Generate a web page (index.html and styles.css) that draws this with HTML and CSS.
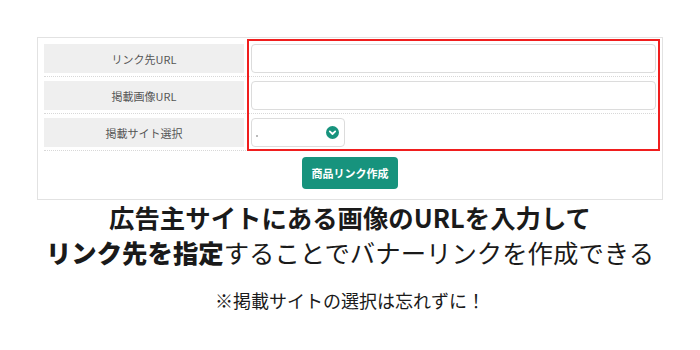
FILE: index.html
```html
<!DOCTYPE html>
<html lang="ja">
<head>
    <meta charset="UTF-8">
    <meta name="viewport" content="width=device-width, initial-scale=1.0">
    <title>バナーリンク作成</title>
    <link rel="stylesheet" href="styles.css">
</head>
<body>
    <div class="form-box">
        <div class="row">
            <div class="label">リンク先URL</div>
            <div class="field"><div class="input"></div></div>
        </div>
        <div class="row">
            <div class="label">掲載画像URL</div>
            <div class="field"><div class="input"></div></div>
        </div>
        <div class="row">
            <div class="label">掲載サイト選択</div>
            <div class="field">
                <div class="select">
                    <span class="dot"></span>
                    <svg class="chevron" width="13" height="13" viewBox="0 0 13 13">
                        <circle cx="6.5" cy="6.5" r="6.5" fill="#17937d"/>
                        <path d="M3.8 5.4 L6.5 8 L9.2 5.4" fill="none" stroke="#fff" stroke-width="1.8" stroke-linecap="round" stroke-linejoin="round"/>
                    </svg>
                </div>
            </div>
        </div>
        <div class="actions">
            <button class="submit">商品リンク作成</button>
        </div>
        <div class="highlight"></div>
    </div>

    <div class="caption">
        <p class="headline">広告主サイトにある画像のURLを入力して<br><strong>リンク先を指定</strong><span class="light">することでバナーリンクを作成できる</span></p>
        <p class="note">※掲載サイトの選択は忘れずに！</p>
    </div>
</body>
</html>
```

FILE: styles.css
```css
body {
    margin: 0;
    background: #fff;
    font-family: "Noto Sans CJK JP", "Noto Sans", sans-serif;
    color: #222;
}
.form-box {
    position: relative;
    box-sizing: border-box;
    width: 626px;
    margin: 37px 0 0 37px;
    padding: 2px 6px 0;
    border: 1px solid #e2e2e2;
}
.row {
    display: grid;
    grid-template-columns: 200px 1fr;
    column-gap: 7px;
    padding: 4px 0 3px;
    border-bottom: 1px dotted #d8d8d8;
}
.label {
    height: 29px;
    display: flex;
    align-items: center;
    justify-content: center;
    background: #efefef;
    font-size: 11px;
    color: #555;
}
.field {
    display: flex;
}
.input {
    flex: 1;
    height: 29px;
    box-sizing: border-box;
    border: 1px solid #dcdcdc;
    border-radius: 4px;
    background: #fff;
}
.select {
    width: 94px;
    height: 29px;
    box-sizing: border-box;
    border: 1px solid #dcdcdc;
    border-radius: 4px;
    display: flex;
    align-items: center;
    justify-content: space-between;
    padding: 0 5px 0 4px;
}
.dot {
    width: 2px;
    height: 2px;
    margin-top: 6px;
    background: #bbb;
}
.chevron {
    display: block;
}
.actions {
    display: flex;
    justify-content: center;
    padding: 6px 0 10px;
}
.submit {
    width: 96px;
    height: 32px;
    border: none;
    border-radius: 4px;
    background: #17937d;
    color: #fff;
    font-family: inherit;
    font-size: 11px;
    font-weight: bold;
}
.highlight {
    position: absolute;
    left: 209px;
    top: 1px;
    width: 409px;
    height: 108px;
    border: 2px solid #f01e1e;
}
.caption {
    text-align: center;
}
.headline {
    margin: 0;
    font-size: 25.4px;
    line-height: 35px;
    font-weight: bold;
    color: #1a1a1a;
}
.headline .light {
    font-weight: normal;
}
.note {
    margin: 17px 0 0;
    font-size: 18px;
    line-height: 26px;
    font-weight: normal;
    color: #1a1a1a;
}
```
